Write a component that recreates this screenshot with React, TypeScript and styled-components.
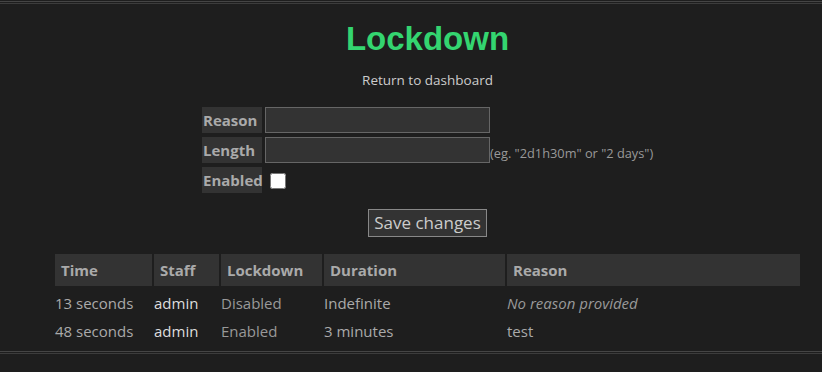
import React from 'react';
import styled, { createGlobalStyle } from 'styled-components';

const GlobalStyle = createGlobalStyle`
  html, body {
    margin: 0;
    background: #1e1e1e;
    color: #aaa;
    font-family: 'Open Sans', 'DejaVu Sans', sans-serif;
  }
`;

const Rule = styled.div<{ $top?: boolean }>`
  height: 1px;
  margin: ${({ $top }) => ($top ? '1px 0 0' : '6px 0 0')};
  border-top: 1px solid #454545;
  border-bottom: 1px solid #3c3c3c;
`;

const Page = styled.main`
  display: flex;
  flex-direction: column;
  align-items: center;
  padding: 0 22px 0 55px;
`;

const Title = styled.h1`
  margin: 16px 0 0;
  font-family: 'Liberation Sans', Arial, sans-serif;
  font-size: 33px;
  font-weight: bold;
  line-height: 38px;
  color: #34d570;
`;

const BackLink = styled.a`
  margin-top: 13px;
  font-size: 13.5px;
  line-height: 18px;
  color: #ccc;
  text-decoration: none;
`;

const Form = styled.form`
  margin-top: 18px;
  display: grid;
  grid-template-columns: 63px 225px 163px;
  row-gap: 4px;
  align-items: end;
`;

const Label = styled.label`
  width: 59px;
  height: 26px;
  padding-left: 1px;
  background: #333;
  color: #aaa;
  font-size: 15px;
  font-weight: bold;
  line-height: 26px;
  white-space: nowrap;
  align-self: stretch;
`;

const TextInput = styled.input`
  box-sizing: border-box;
  width: 225px;
  height: 26px;
  margin: 0;
  background: #333;
  border: 1px solid #666;
  color: #ddd;
  font-family: inherit;
  font-size: 13px;
`;

const Hint = styled.span`
  font-size: 12.8px;
  line-height: 20px;
  color: #999;
  white-space: nowrap;
`;

const Check = styled.input`
  width: 16px;
  height: 16px;
  margin: 0 0 4px 5px;
  accent-color: #fff;
`;

const SaveButton = styled.button`
  margin-top: 16px;
  padding: 0 5px;
  height: 28px;
  background: #333;
  border: 1px solid #888;
  border-radius: 0;
  color: #ccc;
  font-family: inherit;
  font-size: 17px;
  line-height: 26px;
`;

const Log = styled.div`
  align-self: stretch;
  margin-top: 17px;
  display: grid;
  grid-template-columns: 97px 65px 101px 181px 1fr;
  column-gap: 2px;
`;

const HeadCell = styled.div`
  height: 32px;
  padding-left: 6px;
  margin-bottom: 3px;
  background: #333;
  color: #aaa;
  font-size: 15px;
  font-weight: bold;
  line-height: 32px;
`;

const Cell = styled.div<{ $tone?: 'light' | 'dim'; $italic?: boolean }>`
  height: 28px;
  font-size: 15px;
  line-height: 28px;
  white-space: nowrap;
  font-style: ${({ $italic }) => ($italic ? 'italic' : 'normal')};
  color: ${({ $tone }) => ($tone === 'light' ? '#ddd' : $tone === 'dim' ? '#999' : '#aaa')};
`;

const entries = [
  { time: '13 seconds', staff: 'admin', state: 'Disabled', duration: 'Indefinite', reason: '' },
  { time: '48 seconds', staff: 'admin', state: 'Enabled', duration: '3 minutes', reason: 'test' },
];

export default function App() {
  return (
    <>
      <GlobalStyle />
      <Rule $top />
      <Page>
        <Title>Lockdown</Title>
        <BackLink href="#">Return to dashboard</BackLink>
        <Form onSubmit={(e) => e.preventDefault()}>
          <Label>Reason</Label>
          <TextInput type="text" />
          <span />
          <Label>Length</Label>
          <TextInput type="text" />
          <Hint>(eg. "2d1h30m" or "2 days")</Hint>
          <Label>Enabled</Label>
          <Check type="checkbox" />
          <span />
        </Form>
        <SaveButton type="button">Save changes</SaveButton>
        <Log>
          <HeadCell>Time</HeadCell>
          <HeadCell>Staff</HeadCell>
          <HeadCell>Lockdown</HeadCell>
          <HeadCell>Duration</HeadCell>
          <HeadCell>Reason</HeadCell>
          {entries.map((row) => (
            <React.Fragment key={row.time}>
              <Cell>{row.time}</Cell>
              <Cell $tone="light">{row.staff}</Cell>
              <Cell $tone="dim">{row.state}</Cell>
              <Cell>{row.duration}</Cell>
              {row.reason ? (
                <Cell>{row.reason}</Cell>
              ) : (
                <Cell $tone="dim" $italic>
                  No reason provided
                </Cell>
              )}
            </React.Fragment>
          ))}
        </Log>
      </Page>
      <Rule />
    </>
  );
}
